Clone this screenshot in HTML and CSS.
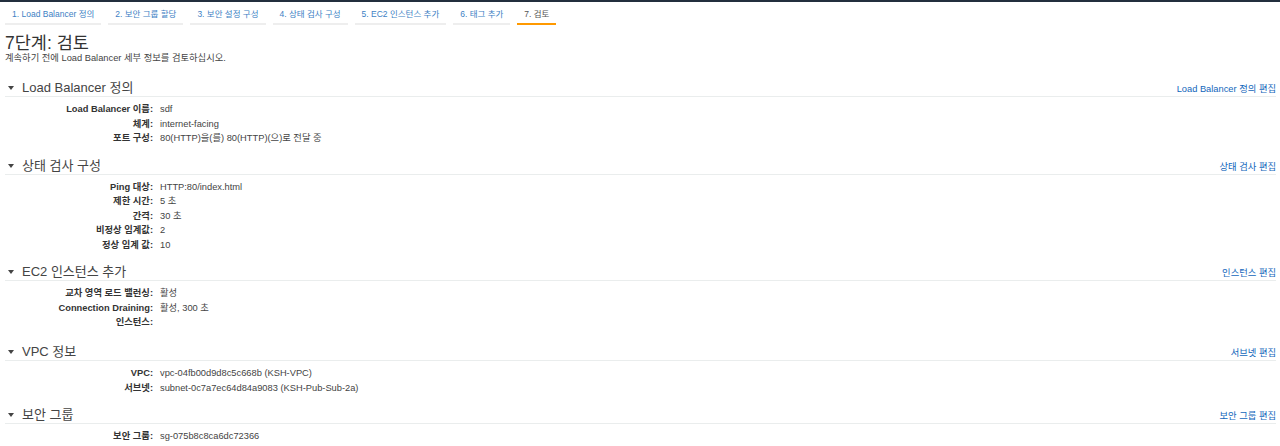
FILE: index.html
```html
<!DOCTYPE html>
<html lang="ko">
<head>
<meta charset="utf-8">
<title>7단계: 검토</title>
<link rel="stylesheet" href="styles.css">
</head>
<body>
<div class="topbar"></div>
<div class="page">
  <nav class="tabs">
    <a class="tab">1. Load Balancer 정의</a>
    <a class="tab">2. 보안 그룹 할당</a>
    <a class="tab">3. 보안 설정 구성</a>
    <a class="tab">4. 상태 검사 구성</a>
    <a class="tab">5. EC2 인스턴스 추가</a>
    <a class="tab">6. 태그 추가</a>
    <a class="tab active">7. 검토</a>
  </nav>
  <h1 class="title">7단계: 검토</h1>
  <p class="subtitle">계속하기 전에 Load Balancer 세부 정보를 검토하십시오.</p>

  <section class="section">
    <div class="sec-head"><span class="caret"></span><h2>Load Balancer 정의</h2><a class="edit">Load Balancer 정의 편집</a></div>
    <dl class="rows">
      <dt>Load Balancer 이름:</dt><dd>sdf</dd>
      <dt>체계:</dt><dd>internet-facing</dd>
      <dt>포트 구성:</dt><dd>80(HTTP)을(를) 80(HTTP)(으)로 전달 중</dd>
    </dl>
  </section>

  <section class="section">
    <div class="sec-head"><span class="caret"></span><h2>상태 검사 구성</h2><a class="edit">상태 검사 편집</a></div>
    <dl class="rows">
      <dt>Ping 대상:</dt><dd>HTTP:80/index.html</dd>
      <dt>제한 시간:</dt><dd>5 초</dd>
      <dt>간격:</dt><dd>30 초</dd>
      <dt>비정상 임계값:</dt><dd>2</dd>
      <dt>정상 임계 값:</dt><dd>10</dd>
    </dl>
  </section>

  <section class="section">
    <div class="sec-head"><span class="caret"></span><h2>EC2 인스턴스 추가</h2><a class="edit">인스턴스 편집</a></div>
    <dl class="rows">
      <dt>교차 영역 로드 밸런싱:</dt><dd>활성</dd>
      <dt>Connection Draining:</dt><dd>활성, 300 초</dd>
      <dt>인스턴스:</dt><dd class="instances"></dd>
    </dl>
  </section>

  <section class="section">
    <div class="sec-head"><span class="caret"></span><h2>VPC 정보</h2><a class="edit">서브넷 편집</a></div>
    <dl class="rows">
      <dt>VPC:</dt><dd>vpc-04fb00d9d8c5c668b (KSH-VPC)</dd>
      <dt>서브넷:</dt><dd>subnet-0c7a7ec64d84a9083 (KSH-Pub-Sub-2a)</dd>
    </dl>
  </section>

  <section class="section">
    <div class="sec-head"><span class="caret"></span><h2>보안 그룹</h2><a class="edit">보안 그룹 편집</a></div>
    <dl class="rows">
      <dt>보안 그룹:</dt><dd>sg-075b8c8ca6dc72366</dd>
    </dl>
  </section>
</div>
</body>
</html>
```

FILE: styles.css
```css
html, body {
  margin: 0;
  padding: 0;
  background: #ffffff;
}
body {
  font-family: "Liberation Sans", Arial, "Noto Sans CJK KR", sans-serif;
  color: #444444;
  font-size: 9.3px;
  overflow: hidden;
}
.topbar {
  height: 2px;
  background: #232f3e;
}
.page {
  padding: 0 4px 0 5px;
}
.tabs {
  display: flex;
  gap: 7px;
}
.tab {
  display: block;
  padding: 6px 7px 3px 7px;
  line-height: 12px;
  font-size: 8.5px;
  color: #3d7fc4;
  border-bottom: 2px solid #eeeeee;
  white-space: nowrap;
}
.tab.active {
  color: #555555;
  border-bottom-color: #ff9900;
}
.title {
  margin: 9px 0 0 0;
  font-size: 17.5px;
  font-weight: normal;
  line-height: 18px;
  color: #333333;
}
.subtitle {
  margin: 0;
  line-height: 12px;
  font-size: 9.3px;
  color: #444444;
}
.section {
  margin-top: 16px;
}
.section + .section {
  margin-top: 12px;
}
.sec-head {
  display: flex;
  align-items: center;
  height: 16px;
  border-bottom: 1px solid #eaeded;
}
.caret {
  width: 0;
  height: 0;
  margin: 0 8px 0 3px;
  border-left: 3.5px solid transparent;
  border-right: 3.5px solid transparent;
  border-top: 4px solid #444444;
}
.sec-head h2 {
  margin: 0;
  font-size: 13px;
  font-weight: normal;
  line-height: 16px;
  color: #444444;
  flex: 1;
}
.edit {
  font-size: 9.3px;
  color: #1166bb;
}
.rows {
  display: grid;
  grid-template-columns: 148px 1fr;
  column-gap: 7px;
  margin: 5px 0 0 0;
}
.rows dt {
  text-align: right;
  font-weight: bold;
  color: #333333;
  line-height: 14.5px;
  white-space: nowrap;
}
.rows dd {
  margin: 0;
  line-height: 14.5px;
  color: #444444;
  min-height: 14.5px;
}
.rows dd.instances {
  min-height: 17px;
}
```
